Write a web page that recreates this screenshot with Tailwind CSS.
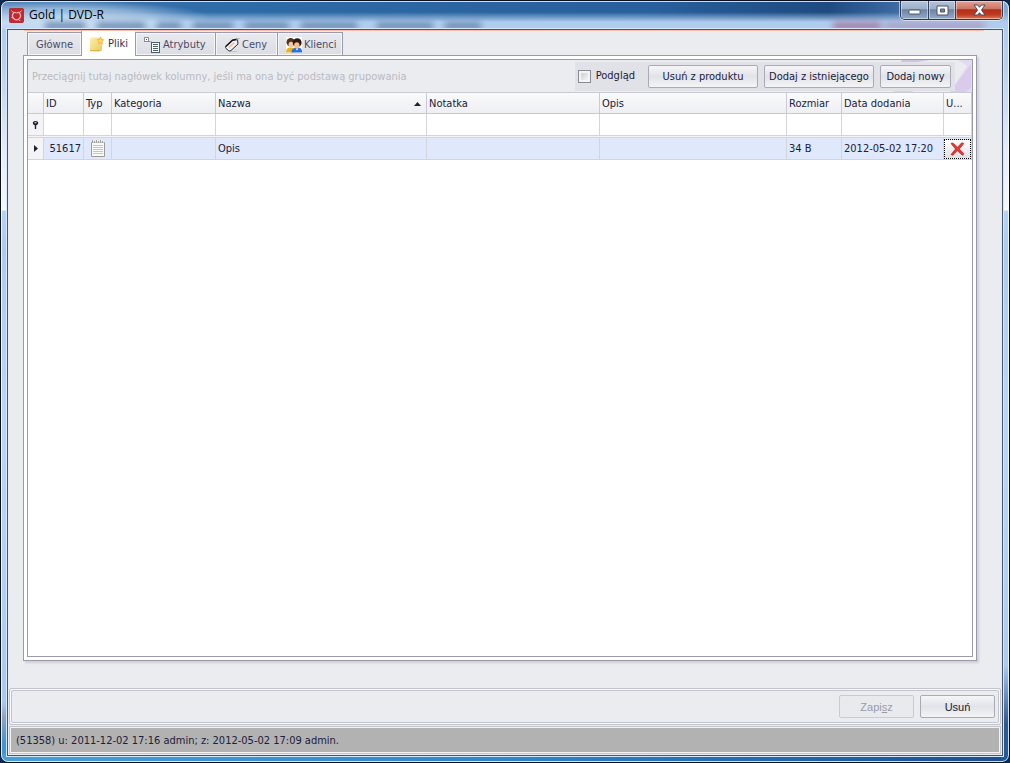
<!DOCTYPE html>
<html lang="pl">
<head>
<meta charset="utf-8">
<title>Gold | DVD-R</title>
<script src="https://cdn.jsdelivr.net/npm/@tailwindcss/browser@4"></script>
</head>
<body class="h-screen overflow-hidden bg-[#0c2a52] font-['DejaVu_Sans_Condensed','DejaVu_Sans',sans-serif] text-[11px] leading-4 text-[#20203a]">
<div class="relative flex h-full flex-col overflow-hidden rounded-lg border border-[#0a1020] bg-[linear-gradient(to_bottom,#a9caee_0,#b8d0ec_60px,#e4edf8_150px,#f4f8fd_205px,#fff_209px,#b4d2f6_210px,#acccee_250px,#b8d6f8_420px,#b0d0f2_600px,#a8caf0_calc(100%-60px),#8fa5bf_calc(100%-45px),#3e97d0_calc(100%-18px),#3f97d2_100%)]">

  <!-- glass frame: right edge, bottom edge and title bar tint -->
  <div aria-hidden="true" class="pointer-events-none absolute inset-0">
    <div class="absolute inset-x-0 bottom-0 h-2 bg-linear-to-r from-[#47a0d6] via-[#2f86cc] to-[#1d4f8e]"></div>
    <div class="absolute right-0 bottom-0 h-24 w-2 bg-linear-to-b from-[#a8caf0] via-[#2a5a96] via-60% to-[#1d5a9a]"></div>
    <div class="absolute inset-x-0 top-0 h-7 bg-[linear-gradient(to_right,#4a80b8,#2f6ca8_20%,#285f9c_65%,#1e4a80_82%,#4a7ab0_92%,#86aad2)] mask-b-from-40% mask-b-to-75%"></div>
    <div class="absolute top-0 left-0 h-7 w-52 bg-[radial-gradient(ellipse_at_30%_60%,#d6e6f6cc,#d6e6f688_40%,transparent_72%)]"></div>
    <div class="absolute top-[21px] left-[44px] flex h-2 gap-3 opacity-80 blur-[3px]">
      <i class="w-10 bg-[#5f7fa8]"></i><i class="w-12 bg-[#5f7fa8]"></i><i class="w-6 bg-[#5f7fa8]"></i><i class="w-10 bg-[#5f7fa8]"></i><i class="w-11 bg-[#5f7fa8]"></i><i class="mr-2 w-14 bg-[#5f7fa8]"></i><i class="w-14 bg-[#5f7fa8]"></i><i class="w-9 bg-[#5f7fa8]"></i>
    </div>
    <div class="absolute top-[21px] right-6 flex h-2 w-38 gap-1 opacity-60 blur-[3px]"><i class="w-12 bg-[#a04a78]"></i><i class="flex-1 bg-[#a884b0]"></i></div>
    <div class="absolute inset-0 rounded-[7px] border border-white/80"></div>
  </div>

  <header class="relative flex h-7 shrink-0 items-start pl-2">
    <svg class="mt-[7px] size-[15px]" viewBox="0 0 15 15" aria-hidden="true">
      <rect x=".5" y=".5" width="14" height="14" rx="1" fill="#c9252f" stroke="#b2303a"/>
      <path d="M2.500 2.500l2.300 2.700M12.500 2.500l-2.300 2.700M4.800 4.200Q7.500 5.600 10.200 4.200" fill="none" stroke="#f3c3c6" stroke-width="1"/>
      <path d="M4.600 5.200a3.900 3.900 0 1 0 5.800 0" fill="none" stroke="#f3c3c6" stroke-width="1.200"/>
      <path d="M2.500 9.500l2 .5M10 11.500l1.200 1.500" stroke="#f3c3c6" fill="none"/>
    </svg>
    <h1 class="mt-[5px] ml-[5px] font-['Open_Sans','Noto_Sans',sans-serif] text-[12px] leading-[18px] text-black">Gold | DVD-R</h1>
    <div class="mr-[6px] ml-auto flex h-[19px] overflow-hidden rounded-b-[5px] border border-t-0 border-[#2b3a52] shadow-[0_0_0_1px_#ffffff90]">
      <button aria-label="Minimalizuj" class="flex w-7 items-end justify-center border-r border-[#33435c] bg-[linear-gradient(to_bottom,#b4c4d8,#9bafc8_45%,#6c84a4_48%,#93abc8)] pb-1 shadow-[inset_0_0_0_1px_#ffffff70]">
        <svg width="13" height="6" viewBox="0 0 13 6"><rect x="1" y="1" width="11" height="4" rx=".5" fill="#fff" stroke="#4b5468"/></svg>
      </button>
      <button aria-label="Maksymalizuj" class="flex w-[27px] items-center justify-center border-r border-[#33435c] bg-[linear-gradient(to_bottom,#b4c4d8,#9bafc8_45%,#6c84a4_48%,#93abc8)] shadow-[inset_0_0_0_1px_#ffffff70]">
        <svg width="13" height="11" viewBox="0 0 13 11"><path fill-rule="evenodd" d="M1 1h11v9H1zM4.500 4v3h4V4z" fill="#fff" stroke="#4b5468"/></svg>
      </button>
      <button aria-label="Zamknij" class="flex w-[46px] items-center justify-center bg-[linear-gradient(to_bottom,#e0a498,#cf7360_45%,#b03018_48%,#bf3a20_75%,#dc7a58)] shadow-[inset_0_0_0_1px_#ffffff70]">
        <svg width="13" height="12" viewBox="0 0 13 12"><path d="M1 1h3.600l1.900 2.300L8.400 1H12L8.500 6l3.500 5H8.400L6.500 8.700 4.600 11H1l3.500-5z" fill="#fff" stroke="#50485a"/></svg>
      </button>
    </div>
  </header>

  <main class="relative mx-[6px] mb-[6px] flex min-h-0 flex-1 flex-col border border-[#46566e] bg-[#ebecef] shadow-[0_0_0_1px_#d5e9fa]">
    <div aria-hidden="true" class="mr-[18px] ml-4 h-px shrink-0 bg-[#fbbcac]"></div>

    <nav role="tablist" class="relative z-10 -mb-px ml-[19px] flex h-[25px] shrink-0 items-end text-[#4a4a68] [&_button]:pt-px">
      <button role="tab" aria-selected="false" class="flex h-6 w-[54px] items-center justify-center border border-r-0 border-[#9a9aac] bg-linear-to-b from-[#e9eaee] to-[#dcdde3] shadow-[inset_0_0_0_1px_#f6f6f9]">Główne</button>
      <button role="tab" aria-selected="true" class="flex h-[25px] w-[54px] items-center gap-[3px] border-l border-[#9a9aac] bg-white pl-[7px] text-[#2c2c50]">
        <svg width="16" height="16" viewBox="0 0 16 16" aria-hidden="true"><defs><linearGradient id="n" x2="1" y2="1"><stop stop-color="#fbf0b0"/><stop offset="1" stop-color="#ecc95a"/></linearGradient></defs><path d="M1 3q0-1.500 1.500-1.500H13V13q0 2.500-2.500 2.500H2Q.5 15.500 1 14z" fill="url(#n)"/><path d="M1 14.500h10" stroke="#d9b24a"/><path d="M11.500.5l1.200 2.600 2.800.4-2 2 .5 2.900-2.500-1.400L9 8.400l.5-2.900-2-2 2.800-.4z" fill="#f8b63c"/><path d="M11.500 2.500l.7 1.500 1.500.3-1.100 1 .2 1.500-1.300-.7-1.300.7.2-1.500-1.100-1 1.500-.3z" fill="#ffe07a"/></svg>Pliki</button>
      <button role="tab" aria-selected="false" class="flex h-6 w-20 items-center gap-0.5 border border-r-0 border-[#9a9aac] bg-linear-to-b from-[#e9eaee] to-[#dcdde3] pl-2 shadow-[inset_0_0_0_1px_#f6f6f9]">
        <svg width="17" height="16" viewBox="0 0 17 16" aria-hidden="true" fill="none"><rect x=".5" y=".5" width="4" height="4" fill="#fff" stroke="#8a8f96"/><path d="M2 2.500h1" stroke="#445"/><path d="M5 4.500h1.500M7.500 5.500v-1" stroke="#8a8f96"/><rect x="7.500" y="5.500" width="8" height="10" fill="#fff" stroke="#46606c"/><path d="M9 7.500h5M9 9.500h5M9 11.500h5M9 13.500h5" stroke="#46606c"/></svg>Atrybuty</button>
      <button role="tab" aria-selected="false" class="flex h-6 w-[62px] items-center gap-0.5 border border-r-0 border-[#9a9aac] bg-linear-to-b from-[#e9eaee] to-[#dcdde3] pl-2 shadow-[inset_0_0_0_1px_#f6f6f9]">
        <svg width="16" height="16" viewBox="0 0 16 16" aria-hidden="true"><path d="M4 14.500h9" stroke="#c6c7cd" stroke-width="1.200"/><path d="M9 3l4.500-.5.500 4.500-7 6.500q-1.200 1-2.500 0l-2.500-2q-1-1.200 0-2.500z" fill="#f1efee" stroke="#2a2a30"/><path d="M1.800 9.500L8.500 3.200l4.500-.9" fill="none" stroke="#17171c" stroke-width="1.600"/><path d="M5 10.500l5-4.800" stroke="#f2b89a" stroke-width="1.400"/><path d="M12 4q1-3 3.500-2.500" fill="none" stroke="#9aa"/></svg>Ceny</button>
      <button role="tab" aria-selected="false" class="flex h-6 w-[66px] items-center gap-0.5 border border-[#9a9aac] bg-linear-to-b from-[#e9eaee] to-[#dcdde3] pl-2 shadow-[inset_0_0_0_1px_#f6f6f9]">
        <svg width="16" height="16" viewBox="0 0 16 16" aria-hidden="true"><rect width="16" height="16" fill="#fff"/><path d="M0 15.500q0-5 4.500-5 4 0 4 5z" fill="#eeb018"/><circle cx="4.700" cy="5.200" r="4.200" fill="#54331a"/><ellipse cx="5" cy="7.700" rx="2.500" ry="3" fill="#f5c99c"/><path d="M5.500 15.500q0-5 5.500-5t5 5z" fill="#2c6fe0"/><circle cx="11.200" cy="5.700" r="4.400" fill="#2b1a14"/><ellipse cx="10.800" cy="8.200" rx="2.700" ry="3" fill="#f3bf90"/><path d="M9.500 11.500l1.500 2 1.500-2z" fill="#fff"/></svg>Klienci</button>
    </nav>

    <section role="tabpanel" aria-label="Pliki" class="mr-[25px] mb-[27px] ml-[15px] flex min-h-0 flex-1 border border-[#9a9aac] bg-white p-[3px] shadow-[2px_2px_2px_#00000020]">
      <div class="flex min-w-0 flex-1 flex-col border border-[#9a9aac]">
        <div class="relative flex h-8 shrink-0 items-center bg-[#ebecef] pr-[17px]">
          <svg class="absolute top-0 right-0 h-8 w-20" viewBox="0 0 80 32" aria-hidden="true"><path d="M0 0h80v32H58L75 6 66 0z" fill="#e4daf0"/><path d="M10 0h28L6 5z" fill="#d3c2e6"/><path d="M58 32L79 4v24l-6 4z" fill="#d9cbe9"/><path d="M0 32l14-5h14l-8 5z" fill="#ddd0ec"/></svg>
          <p class="min-w-0 flex-1 truncate pt-px pl-1 text-[#b9bac4]">Przeciągnij tutaj nagłówek kolumny, jeśli ma ona być podstawą grupowania</p>
          <div class="relative flex h-[29px] shrink-0 items-center gap-[6px] bg-[#e1e2e8] pr-1 pl-[3px] [&_button]:pt-0.5">
            <label class="mr-[7px] flex items-center gap-[5px]"><input type="checkbox" class="size-[13px] appearance-none border border-[#8a8a94] bg-linear-to-br from-[#c4c5ca] to-white shadow-[inset_0_0_0_2px_#f4f4f6]">Podgląd</label>
            <button class="h-[23px] w-[110px] rounded-xs border border-[#a9aab6] bg-linear-to-b from-[#f6f6f8] via-[#e2e3e8] to-[#f4f4f6]">Usuń z produktu</button>
            <button class="h-[23px] w-[110px] rounded-xs border border-[#a9aab6] bg-linear-to-b from-[#f6f6f8] via-[#e2e3e8] to-[#f4f4f6] whitespace-nowrap">Dodaj z istniejącego</button>
            <button class="h-[23px] w-[71px] rounded-xs border border-[#a9aab6] bg-linear-to-b from-[#f6f6f8] via-[#e2e3e8] to-[#f4f4f6] whitespace-nowrap">Dodaj nowy</button>
          </div>
        </div>
        <table class="w-full table-fixed border-separate border-spacing-0 text-left">
          <colgroup><col class="w-4"><col class="w-10"><col class="w-7"><col class="w-[104px]"><col class="w-[211px]"><col class="w-[173px]"><col><col class="w-[55px]"><col class="w-[102px]"><col class="w-7"></colgroup>
          <thead class="[&_th]:h-[22px] [&_th]:border-y [&_th]:border-r [&_th]:border-[#c9cad3] [&_th]:bg-linear-to-b [&_th]:from-[#fafafb] [&_th]:to-[#eeeff2] [&_th]:px-0.5 [&_th]:pt-px [&_th]:pb-0 [&_th]:font-normal [&_th]:whitespace-nowrap">
            <tr><th></th><th>ID</th><th>Typ</th><th>Kategoria</th>
              <th aria-sort="ascending"><span class="flex items-center justify-between pr-[3px]">Nazwa<svg width="7" height="4" viewBox="0 0 7 4" aria-hidden="true"><path d="M3.500 0L7 4H0z" fill="#20203a"/></svg></span></th>
              <th>Notatka</th><th>Opis</th><th>Rozmiar</th><th>Data dodania</th><th>U...</th></tr>
          </thead>
          <tbody class="[&_td]:h-[22px] [&_td]:border-r [&_td]:border-[#d3d4dc] [&_td]:px-0.5 [&_td]:py-0">
            <tr class="[&_td]:border-b">
              <td class="bg-[#f4f4f6]"><svg class="mx-auto" width="7" height="8" viewBox="0 0 7 8" aria-label="Filtr"><path fill-rule="evenodd" d="M3.500 0C5.200 0 6.200.8 6.200 2S5.200 4 4.200 4.300V8H2.800V4.300C1.800 4 .8 3.200.8 2S1.800 0 3.500 0zM2.500 1.300v1h2v-1z" fill="#20203a"/></svg></td>
              <td></td><td></td><td></td><td></td><td></td><td></td><td></td><td></td><td></td>
            </tr>
            <tr aria-hidden="true"><td colspan="10" class="h-0.5! border-b bg-[#f4f4f6] p-0!"></td></tr>
            <tr class="bg-[#e0e8fc] [&_td]:h-[21px] [&_td]:border-b">
              <td class="bg-[#f4f4f6]"><svg class="ml-1" width="4" height="7" viewBox="0 0 4 7" aria-hidden="true"><path d="M0 0l4 3.500L0 7z" fill="#20203a"/></svg></td>
              <td class="text-right">51617</td>
              <td><svg class="mx-auto" width="14" height="17" viewBox="0 0 14 17" aria-label="Plik tekstowy"><path d="M.5 2.500h13v14H.5z" fill="#f7faf9" stroke="#9c9b92"/><path d="M1 1.500h12" stroke="#f0efe9" stroke-width="2"/><path d="M1.500 0v3M3.500 1v2M5.500 0v3M7.500 1v2M9.500 0v3M11.500 1v2" stroke="#a5a49a"/><path d="M2 5.500h10M2 7.500h10M2 9.500h10M2 11.500h10M2 13.500h10" stroke="#b9cbd2"/></svg></td>
              <td></td><td>Opis</td><td></td><td></td><td>34 B</td><td class="whitespace-nowrap">2012-05-02 17:20</td>
              <td class="p-0!"><button aria-label="Usuń" class="flex h-5 w-full items-center justify-center border border-dotted border-black bg-linear-to-b from-white to-[#dfe0e6]"><svg width="15" height="14" viewBox="0 0 15 14" aria-hidden="true"><path d="M1 1.500Q2 .3 3.500 1.500l4 3.700 4.300-4.500 2 .8L9.300 7l4.700 4.800-1.600 1.500-5-4.500L3 13.300 1 12.500 5.500 7z" fill="#e03a34" stroke="#b3211f" stroke-width=".7"/></svg></button></td>
            </tr>
          </tbody>
        </table>
      </div>
    </section>

    <footer class="flex shrink-0 flex-col">
      <div class="mx-px rounded-xs border border-[#c3c4cc] p-px">
        <div class="flex h-[33px] items-center justify-end gap-[6px] rounded-xs border border-[#c3c4cc] pr-[3px] shadow-[0_0_0_1px_#f8f8fa]">
          <button disabled class="h-[23px] w-[75px] rounded-xs border border-[#c9cad2] bg-[#e9eaee] pt-px font-['Liberation_Sans',sans-serif] text-[#9a9ba8]">Zapi<span class="underline">s</span>z</button>
          <button class="h-[23px] w-[75px] rounded-xs border border-[#a9aab6] bg-linear-to-b from-[#f6f6f8] via-[#e2e3e8] to-[#f4f4f6] pt-px font-['Liberation_Sans',sans-serif]">Usuń</button>
        </div>
      </div>
      <div class="mx-px mt-px mb-px border border-[#c3c4cc] bg-[#f2f2f5] p-px">
        <p role="status" class="h-6 bg-[#b2b2b2] px-[5px] pt-px leading-6">(51358) u: 2011-12-02 17:16 admin; z: 2012-05-02 17:09 admin.</p>
      </div>
    </footer>
  </main>
</div>
</body>
</html>
